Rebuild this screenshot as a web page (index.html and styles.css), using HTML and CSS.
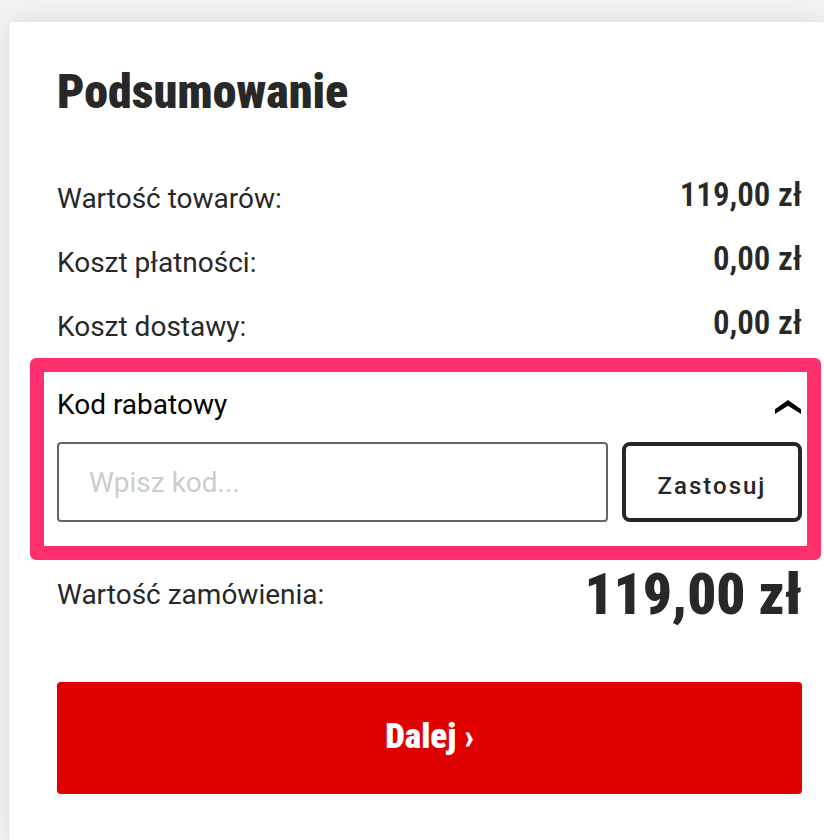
FILE: index.html
```html
<!DOCTYPE html>
<html lang="pl">
<head>
  <meta charset="utf-8">
  <meta name="viewport" content="width=device-width, initial-scale=1">
  <title>Podsumowanie</title>
  <link rel="stylesheet" href="styles.css">
</head>
<body>
  <main class="summary">
    <h1 class="summary-title">Podsumowanie</h1>
    <dl class="costs">
      <div class="cost-row"><dt>Wartość towarów:</dt><dd>119,00 zł</dd></div>
      <div class="cost-row"><dt>Koszt płatności:</dt><dd>0,00 zł</dd></div>
      <div class="cost-row"><dt>Koszt dostawy:</dt><dd>0,00 zł</dd></div>
    </dl>
    <form class="discount">
      <div class="discount-header">
        <label for="code">Kod rabatowy</label>
        <button class="toggle" type="button" aria-label="Zwiń" aria-expanded="true">
          <svg width="26" height="14" viewBox="0 0 26 14" aria-hidden="true"><path d="M0 9.2 13 0l13 9.2V14L13 5.8 0 14z"/></svg>
        </button>
      </div>
      <div class="discount-fields">
        <input class="code" id="code" type="text" placeholder="Wpisz kod...">
        <button class="apply" type="submit">Zastosuj</button>
      </div>
    </form>
    <dl class="total">
      <dt>Wartość zamówienia:</dt>
      <dd>119,00 zł</dd>
    </dl>
    <button class="next" type="button">Dalej ›</button>
  </main>
</body>
</html>
```
FILE: styles.css
```css
* {
  box-sizing: border-box;
}

body {
  margin: 0;
  padding: 21px 0 0 8px;
  min-height: 100vh;
  display: flex;
  background: #f4f4f7;
  color: #282828;
  font: 28px/32px Roboto, sans-serif;
}

button,
input {
  font: inherit;
  color: inherit;
}

.summary {
  flex: 1;
  min-width: 0;
  padding: 42px 22px 46px 48px;
  border: solid #e6e6e7;
  border-width: 1px 0 0 1px;
  background: #fff;
  box-shadow: 0 0 30px rgba(0, 0, 0, 0.1);
}

.summary-title {
  margin: 0 0 47px;
  font: 900 48px/56px "Roboto Condensed", Roboto, sans-serif;
}

dl,
dd {
  margin: 0;
}

.cost-row {
  display: flex;
  justify-content: space-between;
  align-items: center;
  height: 64px;
}

.cost-row dd {
  padding-bottom: 8px;
  font: 600 33px/40px "Roboto Condensed", Roboto, sans-serif;
}

.discount {
  margin: -1px -19px 0 -27px;
  padding: 17px 5px 24px 13px;
  border: 14px solid #ff2e6c;
  border-radius: 6px;
  color: #000;
}

.discount-header {
  display: flex;
  justify-content: space-between;
  align-items: center;
  margin-bottom: 21px;
}

.toggle {
  display: flex;
  padding: 4px 1px 0 0;
  border: 0;
  background: none;
}

.discount-fields {
  display: flex;
  gap: 14px;
}

.code {
  flex: 1;
  min-width: 0;
  height: 80px;
  padding: 0 30px;
  border: 2px solid #656565;
  border-radius: 4px;
  background: #fff;
}

.code::placeholder {
  color: #ccc;
  opacity: 1;
}

.apply {
  width: 180px;
  padding: 8px 0 0;
  border: 4px solid #262626;
  border-radius: 8px;
  background: #fff;
  color: #262626;
  font-size: 24px;
  font-weight: 500;
  letter-spacing: 2px;
}

.total {
  display: flex;
  justify-content: space-between;
  align-items: center;
  margin-bottom: 52px;
}

.total dd {
  font: 900 57px/70px "Roboto Condensed", Roboto, sans-serif;
}

.next {
  width: 100%;
  height: 112px;
  padding-bottom: 4px;
  border: 0;
  border-radius: 4px;
  background: #df0000;
  color: #fff;
  font: 900 35px/40px "Roboto Condensed", Roboto, sans-serif;
}
```
